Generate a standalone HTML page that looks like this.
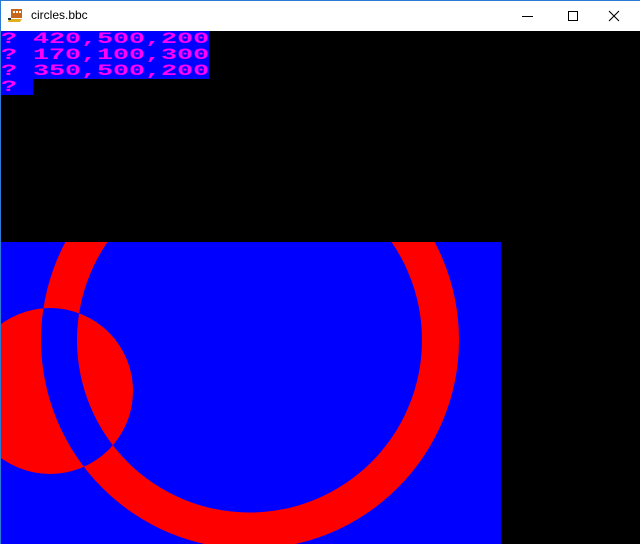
<!DOCTYPE html>
<html><head><style>
html,body{margin:0;padding:0;width:640px;height:544px;overflow:hidden;background:#000}
#tb{position:absolute;left:0;top:0;width:640px;height:31px;background:#fff;border-top:1px solid #2b7bd6;box-sizing:border-box}
#title{position:absolute;left:31px;top:7px;font:12px "Liberation Sans",sans-serif;color:#000}
.lb{position:absolute;left:0;top:0;width:1px;height:544px;background:#2b7bd6}
.row{position:absolute;left:1px;height:16px;background:#0000ff;overflow:hidden}
.row span{position:absolute;left:0;top:-2px;font:bold 16px/20px "Liberation Mono",monospace;color:#ff00ff;white-space:pre;transform:scaleX(1.667);transform-origin:0 0}
</style></head><body>
<div id="tb">
<svg style="position:absolute;left:8px;top:6px" width="16" height="16" viewBox="0 0 16 16"><rect x="3" y="2" width="11" height="9" fill="#c8661c"/><rect x="5" y="4" width="2" height="2" fill="#fff"/><rect x="8" y="4" width="2" height="2" fill="#fff"/><rect x="11" y="4" width="2" height="2" fill="#fff"/><polygon points="1,12 14,12 12,15 0,15" fill="#e0b020"/><rect x="0" y="11" width="3" height="2" fill="#333"/></svg>
<div id="title">circles.bbc</div>
<svg style="position:absolute;left:520px;top:8px" width="110" height="16"><line x1="2" y1="7.5" x2="13" y2="7.5" stroke="#000"/><rect x="48.5" y="2.5" width="9" height="9" fill="none" stroke="#000"/><path d="M89 2 L99 12 M99 2 L89 12" stroke="#000" stroke-width="1.1"/></svg>
</div>
<div class="lb"></div>
<div class="row" style="top:31px;width:208px"><span>? 420,500,200</span></div>
<div class="row" style="top:47px;width:208px"><span>? 170,100,300</span></div>
<div class="row" style="top:63px;width:208px"><span>? 350,500,200</span></div>
<div class="row" style="top:79px;width:32px"><span>?</span></div>
<svg style="position:absolute;left:0;top:0" width="640" height="544">
<defs><clipPath id="c"><rect x="1" y="242" width="500" height="302"/></clipPath></defs>
<rect x="1" y="242" width="500" height="302" fill="#0000ff"/>
<path clip-path="url(#c)" fill="#ff0000" fill-rule="evenodd" d="M459,340 A209,209 0 1,0 41,340 A209,209 0 1,0 459,340 Z M422,340 A172.5,172.5 0 1,0 77,340 A172.5,172.5 0 1,0 422,340 Z M133,391 A83,83 0 1,0 -33,391 A83,83 0 1,0 133,391 Z"/>
</svg>
</body></html>
